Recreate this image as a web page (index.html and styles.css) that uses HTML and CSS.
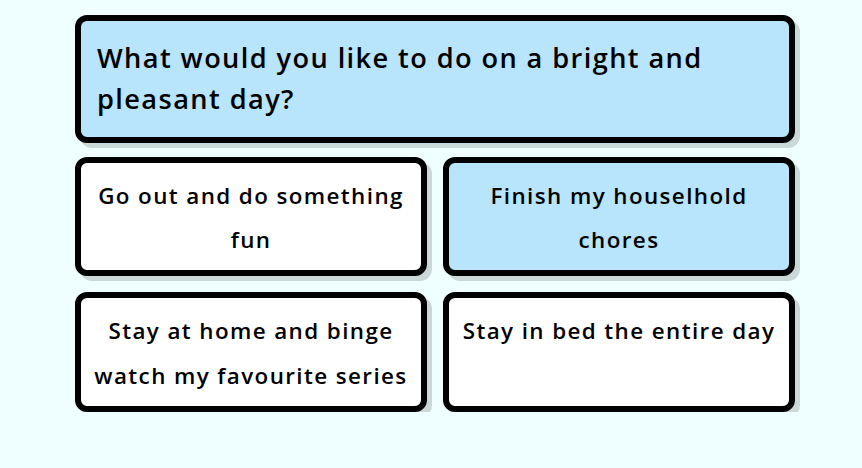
FILE: index.html
```html
<!DOCTYPE html>
<html>
<head>
<meta charset="utf-8">
<link rel="stylesheet" href="styles.css">
</head>
<body>
<div class="quiz">
  <div class="question">What would you like to do on a bright and pleasant day?</div>
  <div class="options">
    <div class="option">Go out and do something fun</div>
    <div class="option selected">Finish my houselhold chores</div>
    <div class="option">Stay at home and binge watch my favourite series</div>
    <div class="option">Stay in bed the entire day</div>
  </div>
</div>
</body>
</html>
```
FILE: styles.css
```css
html, body {
  margin: 0;
  background: #effefe;
}
body {
  font-family: "Open Sans", "Noto Sans", sans-serif;
  font-weight: 600;
  color: #000;
}
.quiz {
  width: 720px;
  margin-left: 75px;
  padding-top: 15px;
  display: flex;
  flex-direction: column;
  gap: 14px;
}
.question {
  background: #b8e4fc;
  border: 6px solid #000;
  border-radius: 12px;
  box-shadow: 5px 5px 0 #cbd8d8;
  padding: 17px 16px;
  font-size: 27.2px;
  line-height: 40.8px;
  letter-spacing: 1.4px;
}
.options {
  display: grid;
  grid-template-columns: 1fr 1fr;
  gap: 16px;
}
.option {
  background: #fff;
  border: 6px solid #000;
  border-radius: 12px;
  box-shadow: 5px 5px 0 #cbd8d8;
  padding: 11px 8px 7px;
  font-size: 22.4px;
  line-height: 44.8px;
  letter-spacing: 1.4px;
  text-align: center;
}
.option.selected {
  background: #b8e4fc;
}
```
